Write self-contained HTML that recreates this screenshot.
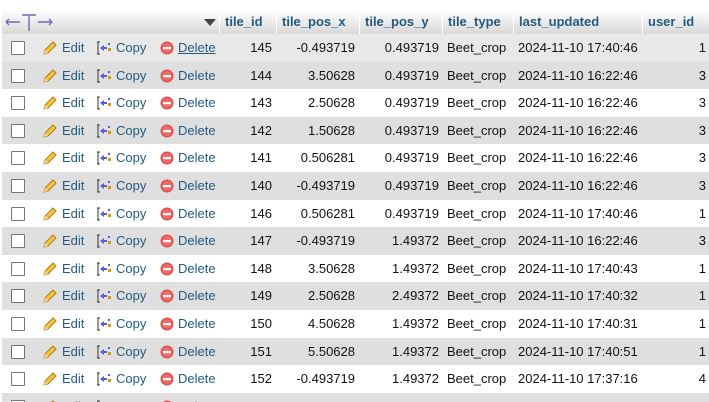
<!DOCTYPE html><html><head><meta charset="utf-8"><style>
html,body{margin:0;width:709px;height:402px;overflow:hidden}
body{background:#fff;font-family:"Liberation Sans",Arial,sans-serif;font-size:13px;position:relative}
.h{position:absolute;top:10px;height:24px;background:linear-gradient(#fff,#d8d8d8);}
.hc{position:absolute;top:10px;height:24px;line-height:24px;font-weight:bold;color:#235a81;padding-left:5px;box-sizing:border-box;border-left:1px solid #fff;background:linear-gradient(#fff,#d8d8d8)}
.r{position:absolute;left:2px;width:707px;height:27.6px;line-height:27.6px;color:#111}
.r span{position:absolute;white-space:nowrap}
.cb{position:absolute;left:9px;top:7px;width:12px;height:12px;border:1px solid #767676;background:#fff;border-radius:1px}
.l{color:#235a81}
.rt{text-align:right}
</style></head><body>
<div class="h" style="left:2px;width:217px"></div>
<svg width="50" height="20" viewBox="0 0 50 20" style="position:absolute;left:5px;top:12px"><g stroke="#6a6ab8" stroke-width="1.4" fill="none"><path d="M1 10h14M1 10l3-3M1 10l3 3"/><path d="M17 3h14M24 3v16"/><path d="M33 10h14M47 10l-3-3M47 10l-3 3"/></g></svg>
<div style="position:absolute;left:204px;top:19px;width:0;height:0;border-left:6px solid transparent;border-right:6px solid transparent;border-top:7px solid #444"></div>
<div class="hc" style="left:219px;width:57px">tile_id</div>
<div class="hc" style="left:276px;width:83px">tile_pos_x</div>
<div class="hc" style="left:359px;width:83px">tile_pos_y</div>
<div class="hc" style="left:442px;width:71px">tile_type</div>
<div class="hc" style="left:513px;width:129px">last_updated</div>
<div class="hc" style="left:642px;width:67px">user_id</div>
<div id="rows"></div>
<script>
var d=[[145,"-0.493719","0.493719","17:40:46",1],[144,"3.50628","0.493719","16:22:46",3],[143,"2.50628","0.493719","16:22:46",3],[142,"1.50628","0.493719","16:22:46",3],[141,"0.506281","0.493719","16:22:46",3],[140,"-0.493719","0.493719","16:22:46",3],[146,"0.506281","0.493719","17:40:46",1],[147,"-0.493719","1.49372","16:22:46",3],[148,"3.50628","1.49372","17:40:43",1],[149,"2.50628","2.49372","17:40:32",1],[150,"4.50628","1.49372","17:40:31",1],[151,"5.50628","1.49372","17:40:51",1],[152,"-0.493719","1.49372","17:37:16",4],[153,"0.506281","1.49372","17:37:17",4]];
var h="";
var pencil='<svg width="16" height="16" viewBox="0 0 16 16" style="position:absolute;left:40px;top:6px"><path d="M2 14l1-4 8-8 3 3-8 8z" fill="#f4c542" stroke="#b07a10"/><path d="M2 14l1-4 3 3z" fill="#f1d9a8"/></svg>';
var copy='<svg width="16" height="16" viewBox="0 0 16 16" style="position:absolute;left:94px;top:6px"><path d="M1 2h3M1 14h3M2 2v12" stroke="#333" fill="none"/><path d="M4 8l4-3v2h3v2H8v2z" fill="#5b5bd6"/><rect x="12" y="3" width="2" height="2" fill="#5b5bd6"/><rect x="12" y="8" width="3" height="3" fill="#d59a00"/></svg>';
var del='<svg width="14" height="14" viewBox="0 0 14 14" style="position:absolute;left:158px;top:7px"><circle cx="7" cy="7" r="6.5" fill="#e05050"/><circle cx="7" cy="7" r="5" fill="#ef6b6b"/><rect x="3" y="6" width="8" height="2.2" fill="#fff"/></svg>';
for(var i=0;i<d.length;i++){var r=d[i];var bg=i==0?"#e8e8e8":(i%2?"#dfdfdf":"#fff");
h+='<div class="r" style="top:'+(34+i*27.6)+'px;background:'+bg+'"><div class="cb"></div>'+pencil+'<span class="l" style="left:60px">Edit</span>'+copy+'<span class="l" style="left:114px">Copy</span>'+del+'<span class="l" style="left:176px'+(i==0?';text-decoration:underline':'')+'">Delete</span><span class="rt" style="right:437px">'+r[0]+'</span><span class="rt" style="right:354px">'+r[1]+'</span><span class="rt" style="right:270px">'+r[2]+'</span><span style="left:445px">Beet_crop</span><span style="left:516px">2024-11-10 '+r[3]+'</span><span class="rt" style="right:3px">'+r[4]+'</span></div>';}
document.getElementById("rows").innerHTML=h;
</script>
</body></html>
